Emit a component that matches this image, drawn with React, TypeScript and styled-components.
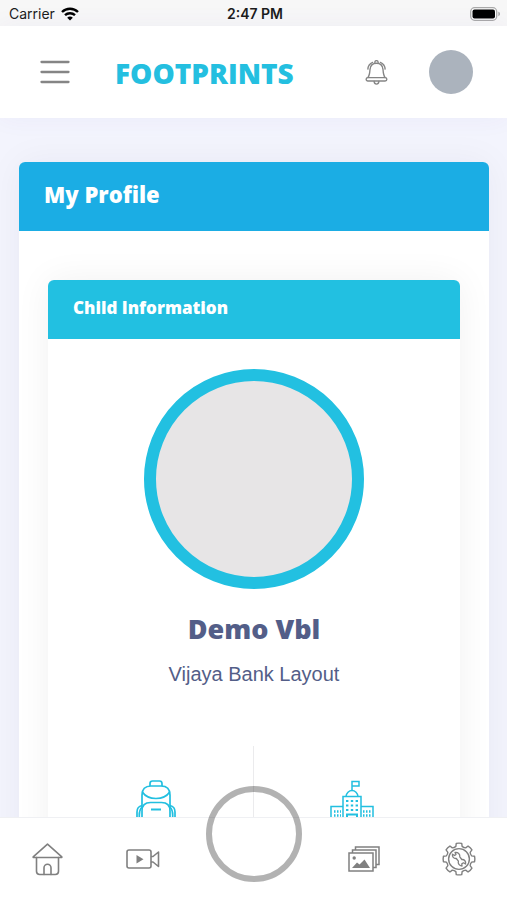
import React from "react";
import styled, { createGlobalStyle } from "styled-components";

const GlobalStyle = createGlobalStyle`
  * { box-sizing: border-box; }
  body {
    margin: 0;
    background: #f3f4fd;
    font-family: "Liberation Sans", Arial, sans-serif;
    color: #535e88;
  }
  button { border: 0; padding: 0; background: none; font: inherit; cursor: pointer; }
`;

const displayFont = `"Open Sans", "Noto Sans", sans-serif`;

const Screen = styled.div`
  height: 100vh;
  display: flex;
  flex-direction: column;
  overflow: hidden;
`;

const StatusBar = styled.div`
  flex: none;
  height: 26px;
  padding: 1px 6px 0 9px;
  display: grid;
  grid-template-columns: 1fr auto 1fr;
  align-items: center;
  background: #f7f7f7;
  color: #1c1c1c;
  font-family: "Inter", sans-serif;
  font-size: 14px;
`;

const Carrier = styled.div`
  display: flex;
  align-items: center;
  gap: 6px;
`;

const Clock = styled.time`
  font-weight: 600;
`;

const Battery = styled.div`
  display: flex;
  justify-content: flex-end;
`;

const Header = styled.header`
  flex: none;
  height: 92px;
  padding: 0 34px 0 36px;
  display: flex;
  align-items: center;
  background: #fff;
  box-shadow: 0 0 24px rgba(82, 63, 205, 0.05);
  z-index: 1;
`;

const IconButton = styled.button<{ $size: number }>`
  flex: none;
  display: flex;
  align-items: center;
  justify-content: center;
  width: ${(p) => p.$size}px;
  height: ${(p) => p.$size}px;
`;

const Brand = styled.a`
  margin-left: 41px;
  margin-right: auto;
  padding-top: 2px;
  color: #24bfe0;
  font-family: ${displayFont};
  font-weight: 800;
  font-size: 28px;
  line-height: 32px;
  text-decoration: none;
`;

const HeaderActions = styled.div`
  display: flex;
  align-items: center;
  gap: 37px;
`;

const Avatar = styled.button`
  width: 44px;
  height: 44px;
  border-radius: 50%;
  background: #abb3bd;
`;

const Main = styled.main`
  flex: 1;
  min-height: 0;
  overflow: hidden;
  padding: 44px 18px 0 19px;
`;

const Card = styled.section<{ $shadow: string }>`
  border-radius: 6px;
  background: #fff;
  box-shadow: 0 0 36px ${(p) => p.$shadow};
`;

const ProfileTitle = styled.h1`
  margin: 0;
  padding: 16px 25px 21px;
  border-radius: 6px 6px 0 0;
  background: #1bade4;
  color: #fff;
  font-family: ${displayFont};
  font-weight: 800;
  font-size: 22px;
  line-height: 32px;
`;

const ProfileBody = styled.div`
  padding: 49px 29px;
`;

const ChildTitle = styled.h2`
  margin: 0;
  padding: 16px 25px 19px;
  border-radius: 6px 6px 0 0;
  background: #22c0e1;
  color: #fff;
  font-family: ${displayFont};
  font-weight: 800;
  font-size: 17px;
  line-height: 24px;
`;

const ChildBody = styled.div`
  padding: 30px 10px;
  display: flex;
  flex-direction: column;
  align-items: center;
`;

const Photo = styled.div`
  width: 220px;
  height: 220px;
  border: 12px solid #22c0e1;
  border-radius: 50%;
  background: #e7e5e6;
`;

const Name = styled.h3`
  margin: 23px 0 0;
  font-family: ${displayFont};
  font-weight: 800;
  font-size: 27px;
  line-height: 34px;
`;

const Branch = styled.p`
  margin: 16px 0 0;
  font-size: 20px;
  line-height: 24px;
`;

const Facts = styled.div`
  align-self: stretch;
  margin-top: 60px;
  display: grid;
  grid-template-columns: 1fr 1fr;
`;

const Fact = styled.div`
  height: 160px;
  padding-top: 34px;
  display: flex;
  justify-content: center;
  &:first-child { border-right: 1px solid #ebebed; }
`;

const TabBar = styled.nav`
  flex: none;
  height: 83px;
  display: grid;
  grid-template-columns: 3fr 3fr 4fr 3fr 3fr;
  justify-items: center;
  align-items: center;
  background: #fff;
  border-top: 1px solid #eff0f3;
  z-index: 1;
`;

const Ring = styled.button`
  width: 96px;
  height: 96px;
  margin-top: -50px;
  border: 6px solid rgba(0, 0, 0, 0.3);
  border-radius: 50%;
`;

const WifiIcon = () => (
  <svg width="18" height="14" viewBox="0 0 18 14" fill="none" stroke="#000" strokeWidth="2.4">
    <path d="M1 5C5.500.6 12.500.6 17 5" />
    <path d="M4 8.200C6.800 5.500 11.200 5.500 14 8.200" />
    <path d="M9 13.500 6.200 10.700C7.800 9.200 10.200 9.200 11.800 10.700Z" fill="#000" stroke="none" />
  </svg>
);

const BatteryIcon = () => (
  <svg width="31" height="14" viewBox="0 0 31 14">
    <rect x=".7" y=".7" width="26" height="12.600" rx="4" fill="#fff" stroke="#a9a9a9" strokeWidth="1.300" />
    <rect x="2.500" y="2.500" width="22.500" height="9" rx="2" fill="#000" />
    <path d="M28.300 4.800C30.600 5.300 30.600 8.700 28.300 9.200Z" fill="#a9a9a9" />
  </svg>
);

const MenuIcon = () => (
  <svg width="30" height="24" viewBox="0 0 30 24" stroke="#858585" strokeWidth="2.300" strokeLinecap="round">
    <path d="M1.500 2H28.500M1.500 12H28.500M1.500 22H28.500" />
  </svg>
);

const BellIcon = () => (
  <svg width="23" height="25" viewBox="0 0 24 26" fill="none" stroke="#858585" strokeWidth="1.400" strokeLinecap="round" strokeLinejoin="round">
    <path d="M10.300 3V2.300a1.700 1.700 0 0 1 3.400 0V3" />
    <path d="M3 18.300C4.800 16 5 13 5.200 10C5.500 5.700 8.200 3.300 12 3.300S18.500 5.700 18.800 10C19 13 19.200 16 21 18.300" />
    <rect x="1.200" y="18.300" width="21.600" height="3.600" rx="1.800" />
    <path d="M9.500 22.300C9.800 26 14.200 26 14.500 22.300M3 9.500C3.200 6.200 4.800 3.700 8 2.400M21 9.500C20.800 6.200 19.200 3.700 16 2.400" />
  </svg>
);

const BackpackIcon = () => (
  <svg width="40" height="48" viewBox="0 0 40 48" fill="none" stroke="#22bfe0" strokeWidth="1.700" strokeLinejoin="round">
    <path d="M14 6V3.500Q14 1 16.500 1H23.500Q26 1 26 3.500V6" />
    <path d="M6 27V15C6 9 9 6 15 6H25C31 6 34 9 34 15V27" />
    <path d="M6.300 12C9 16 12.500 18.500 20 18.500S31 16 33.700 12" />
    <path d="M6 44V31Q6 22.500 14.500 22.500H25.500Q34 22.500 34 31V44" />
    <path d="M6 25.500Q1 26.500 1 32V45M6 27Q3.300 30 3.300 35V45M34 25.500Q39 26.500 39 32V45M34 27Q36.700 30 36.700 35V45" />
    <path d="M15 29.500H25" strokeWidth="2" />
  </svg>
);

const SchoolIcon = () => (
  <svg width="44" height="48" viewBox="0 0 44 48" fill="none" stroke="#22bfe0" strokeWidth="1.500">
    <path d="M22 11V1.500H29V6H22" />
    <path d="M16 16.500C16.300 13 19 10.500 22 10.500S27.700 13 28 16.500" />
    <path d="M13 46V16.500H31V46M13 26.500H1V46M31 26.500H43V46" />
    <path d="M17 38V34.500H27V38" strokeWidth="2" />
    <path d="M16 21H28M16 25.500H28M16 30H28" strokeDasharray="2.400 2.400" strokeWidth="1.800" />
    <path d="M4 31.500H11M4 35.500H11M33 31.500H41M33 35.500H41" strokeDasharray="1.500 1.500" strokeWidth="2.500" />
  </svg>
);

const HomeIcon = () => (
  <svg width="31" height="33" viewBox="0 0 31 33" fill="none" stroke="#808080" strokeWidth="1.600" strokeLinejoin="round" strokeLinecap="round">
    <path d="M15.500 1.200 29.800 13.800V14.500H1.200V13.800Z" />
    <path d="M4.500 14.500V28.300Q4.500 31.500 7.700 31.500H23.300Q26.500 31.500 26.500 28.300V14.500" />
    <path d="M12 31.500V24.800a3.500 3.500 0 0 1 7 0V31.500" />
  </svg>
);

const VideoIcon = () => (
  <svg width="34" height="20" viewBox="0 0 34 20" fill="none" stroke="#808080" strokeWidth="1.600" strokeLinejoin="round">
    <rect x="1" y="1" width="24" height="18" rx="2" />
    <path d="M25 7.500H27L32.500 3V17.500L27 13H25" />
    <path d="M10.500 6V14.500L17.500 10.200Z" fill="#808080" stroke="none" />
  </svg>
);

const GalleryIcon = () => (
  <svg width="32" height="26" viewBox="0 0 32 26" fill="none" stroke="#808080" strokeWidth="1.500">
    <path d="M7.500 4V1H31V18.500H28" />
    <path d="M4.500 7V4H28V21.500H25" />
    <rect x="1" y="7" width="24" height="18" />
    <circle cx="6.200" cy="12" r="1.700" fill="#808080" stroke="none" />
    <path d="M4 22 9 16.500 11.500 18.500 16.500 13.500 22 22Z" fill="#808080" stroke="none" />
  </svg>
);

const toothAngles = [0, 45, 90, 135, 180, 225, 270, 315];

const gearPath = (() => {
  const point = (radius: number, degrees: number) => {
    const angle = ((degrees - 90) * Math.PI) / 180;
    return `${(17 + radius * Math.cos(angle)).toFixed(2)} ${(17 + radius * Math.sin(angle)).toFixed(2)}`;
  };
  return (
    toothAngles
      .map((a, i) => `${i ? "L" : "M"}${point(13, a - 14)}L${point(15.8, a - 10)}Q${point(16.2, a)} ${point(15.8, a + 10)}L${point(13, a + 14)}Q${point(12.2, a + 22.5)} ${point(13, a + 31)}`)
      .join("") + "Z"
  );
})();

const SettingsIcon = () => (
  <svg width="34" height="34" viewBox="0 0 34 34" fill="none" stroke="#808080" strokeWidth="1.400" strokeLinejoin="round">
    <path d={gearPath} />
    <circle cx="17" cy="17" r="10.400" />
    <path d="M13 10.500C16 10 18.200 12.200 17.800 14.800L19.800 17.500C22.500 17.300 24.200 19.500 23.500 22L21.500 20.800 19.800 21.900 20 24C17.300 23.800 15.700 21.500 16.400 19.200L14.300 16.500C11.700 16.700 9.900 14.700 10.500 12.200L12.600 13.500 14 12.500Z" strokeWidth="1.300" />
  </svg>
);

export default function App() {
  return (
    <Screen>
      <GlobalStyle />
      <StatusBar>
        <Carrier>Carrier <WifiIcon /></Carrier>
        <Clock>2:47 PM</Clock>
        <Battery><BatteryIcon /></Battery>
      </StatusBar>
      <Header>
        <IconButton $size={38} aria-label="Menu"><MenuIcon /></IconButton>
        <Brand href="#">FOOTPRINTS</Brand>
        <HeaderActions>
          <IconButton $size={32} aria-label="Notifications"><BellIcon /></IconButton>
          <Avatar aria-label="Account" />
        </HeaderActions>
      </Header>
      <Main>
        <Card $shadow="rgba(40, 40, 60, 0.05)">
          <ProfileTitle>My Profile</ProfileTitle>
          <ProfileBody>
            <Card $shadow="rgba(0, 0, 0, 0.06)">
              <ChildTitle>Child Information</ChildTitle>
              <ChildBody>
                <Photo />
                <Name>Demo Vbl</Name>
                <Branch>Vijaya Bank Layout</Branch>
                <Facts>
                  <Fact><BackpackIcon /></Fact>
                  <Fact><SchoolIcon /></Fact>
                </Facts>
              </ChildBody>
            </Card>
          </ProfileBody>
        </Card>
      </Main>
      <TabBar>
        <IconButton $size={48} aria-label="Home"><HomeIcon /></IconButton>
        <IconButton $size={48} aria-label="Videos"><VideoIcon /></IconButton>
        <Ring aria-label="Open dashboard" />
        <IconButton $size={48} aria-label="Gallery"><GalleryIcon /></IconButton>
        <IconButton $size={48} aria-label="Settings"><SettingsIcon /></IconButton>
      </TabBar>
    </Screen>
  );
}
